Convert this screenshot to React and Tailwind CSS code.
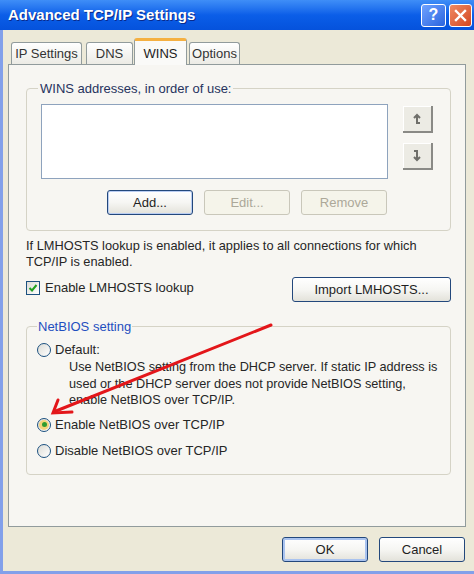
import React from 'react';

// Windows XP style "Advanced TCP/IP Settings" dialog, WINS tab

function XpButton({ children, className = '', disabled = false, focused = false }) {
  const look = disabled
    ? 'border-[#c9c7ba] bg-[#f5f4ea] text-[#aca899]'
    : 'border-[#23487c] bg-linear-to-b from-white via-[#f6f6f3] to-[#e3e2da] text-[#1e1e1e]';
  return (
    <button
      className={`h-[25px] rounded-[3px] border text-[13px] leading-none ${look} ${
        focused ? 'shadow-[inset_0_0_0_1px_#b9cdf2]' : ''
      } ${className}`}
    >
      {children}
    </button>
  );
}

function Radio({ checked = false }) {
  return (
    <span className="flex h-[14px] w-[14px] shrink-0 items-center justify-center rounded-full border border-[#1c5180] bg-linear-to-br from-[#dcdcd6] to-white">
      {checked && (
        <span className="flex h-[10px] w-[10px] items-center justify-center rounded-full bg-[#f4d37a]">
          <span className="h-[5px] w-[5px] rounded-full bg-[#2f9c2f]" />
        </span>
      )}
    </span>
  );
}

function ArrowButton({ down = false }) {
  return (
    <button className="flex h-[27px] w-[30px] items-center justify-center border-r-2 border-b-2 border-[#8a8a86] bg-[#ecebe4] shadow-[inset_1px_1px_0_white]">
      <svg width="14" height="14" viewBox="0 0 14 14" fill="none" stroke="#6f6f6a" strokeWidth="2">
        {down ? (
          <>
            <path d="M4 2 H7 V11" />
            <path d="M4 8 L7 11 L10 8" />
          </>
        ) : (
          <>
            <path d="M7 3 V11 H10" />
            <path d="M4 6 L7 3 L10 6" />
          </>
        )}
      </svg>
    </button>
  );
}

const tabs = [
  { label: 'IP Settings', w: 'w-[71px]', ml: 'ml-[3px]' },
  { label: 'DNS', w: 'w-[47px]', ml: 'ml-[4px]' },
  { label: 'WINS', w: 'w-[53px]', ml: 'ml-[1px]', active: true },
  { label: 'Options', w: 'w-[51px]', ml: 'ml-[2px]' },
];

export default function App() {
  return (
    <div className="relative flex h-[574px] w-[474px] flex-col overflow-hidden font-['Liberation_Sans',Arial,sans-serif] text-[13px] text-[#262626]">
      {/* title bar */}
      <div className="flex h-[30px] shrink-0 items-center justify-between bg-linear-to-b from-[#3f8ef7] via-[#0b5ee8] to-[#0552dc] pl-[8px] pr-[2px]">
        <span className="text-[15px] font-bold text-white [text-shadow:1px_1px_0_#0a2a8a]">
          Advanced TCP/IP Settings
        </span>
        <div className="flex items-center gap-[3px]">
          <div className="flex h-[23px] w-[25px] items-center justify-center rounded-[3px] border border-white bg-linear-to-br from-[#6fa2ff] to-[#2a63de] text-[16px] font-bold text-white">
            ?
          </div>
          <div className="flex h-[23px] w-[23px] items-center justify-center rounded-[3px] border border-white bg-linear-to-br from-[#f08a62] to-[#d2451e]">
            <svg width="13" height="13" viewBox="0 0 13 13" stroke="white" strokeWidth="2.4" strokeLinecap="square">
              <path d="M2 2 L11 11 M11 2 L2 11" />
            </svg>
          </div>
        </div>
      </div>

      {/* body */}
      <div className="flex flex-1 flex-col border-l-[3px] border-b-[3px] border-[#82a0ea] bg-[#ece9d8] pl-[5px] pr-[8px]">
        {/* tabs */}
        <div className="mt-[8px] flex h-[26px] items-end">
          {tabs.map((t) =>
            t.active ? (
              <div
                key={t.label}
                className={`relative z-10 -mb-px flex h-[27px] ${t.w} ${t.ml} items-start justify-center rounded-t-[3px] border-x border-t-[3px] border-x-[#919b9c] border-t-[#f5b042] bg-[#fafaf8] pt-[3px] text-[#222]`}
              >
                {t.label}
              </div>
            ) : (
              <div
                key={t.label}
                className={`flex h-[22px] ${t.w} ${t.ml} items-center justify-center rounded-t-[3px] border border-b-0 border-[#919b9c] bg-linear-to-b from-white to-[#ecebe5] text-[#333]`}
              >
                {t.label}
              </div>
            )
          )}
        </div>

        {/* tab panel */}
        <div className="flex h-[463px] flex-col border border-[#919b9c] bg-[#f7f6f2] pl-[17px]">
          <fieldset className="mt-[16px] w-[425px] rounded-[4px] border border-[#d5d3c6] px-[14px] pb-[15px]">
            <legend className="ml-[-3px] px-[2px] leading-[15px] text-[#26335e]">WINS addresses, in order of use:</legend>
            <div className="mt-[8px] flex items-start">
              <div className="h-[75px] w-[347px] border border-[#8ea3bd] bg-white" />
              <div className="ml-[15px] mt-[2px] flex flex-col gap-[10px]">
                <ArrowButton />
                <ArrowButton down />
              </div>
            </div>
            <div className="ml-[66px] mt-[11px] flex gap-[11px]">
              <XpButton className="w-[86px]" focused>Add...</XpButton>
              <XpButton className="w-[86px]" disabled>Edit...</XpButton>
              <XpButton className="w-[86px]" disabled>Remove</XpButton>
            </div>
          </fieldset>

          <p className="mt-[7px] text-[12.8px] leading-[16px]">
            If LMHOSTS lookup is enabled, it applies to all connections for which
            <br />
            TCP/IP is enabled.
          </p>

          <div className="mt-[7px] flex w-[425px] items-center justify-between">
            <div className="-mt-[3px] flex items-center gap-[5px]">
              <span className="flex h-[14px] w-[14px] items-center justify-center border border-[#1c5180] bg-linear-to-br from-[#dcdcd6] to-white">
                <svg width="10" height="10" viewBox="0 0 10 10" fill="none" stroke="#21a121" strokeWidth="2">
                  <path d="M1.5 5 L4 7.5 L8.5 2" />
                </svg>
              </span>
              <span>Enable LMHOSTS lookup</span>
            </div>
            <XpButton className="w-[159px]">Import LMHOSTS...</XpButton>
          </div>

          <fieldset className="mt-[17px] w-[425px] rounded-[4px] border border-[#d5d3c6] pl-[10px] pb-[15px]">
            <legend className="ml-[0px] px-[1px] leading-[15px] text-[#1f4fbf]">NetBIOS setting</legend>
            <div className="mt-[8px] flex h-[16px] items-center gap-[4px]">
              <Radio />
              <span>Default:</span>
            </div>
            <p className="ml-[32px] mt-[1px] text-[12.7px] leading-[16.5px]">
              Use NetBIOS setting from the DHCP server. If static IP address is
              <br />
              used or the DHCP server does not provide NetBIOS setting,
              <br />
              enable NetBIOS over TCP/IP.
            </p>
            <div className="mt-[8px] flex h-[16px] items-center gap-[4px]">
              <Radio checked />
              <span>Enable NetBIOS over TCP/IP</span>
            </div>
            <div className="mt-[10px] flex h-[16px] items-center gap-[4px]">
              <Radio />
              <span>Disable NetBIOS over TCP/IP</span>
            </div>
          </fieldset>
        </div>

        {/* dialog buttons */}
        <div className="mt-[10px] flex justify-end gap-[11px] pr-[1px]">
          <XpButton className="w-[86px] border-[#1d3f7a] shadow-[inset_0_0_0_2px_#a9c3ef]">OK</XpButton>
          <XpButton className="w-[86px]">Cancel</XpButton>
        </div>
      </div>

      {/* red annotation arrow */}
      <svg className="pointer-events-none absolute left-0 top-0" width="474" height="574" fill="none" stroke="#e3161a" strokeWidth="3" strokeLinecap="round">
        <path d="M271 325 L56 411" />
        <path d="M58 400 L53 413 L72 412" />
      </svg>
    </div>
  );
}
